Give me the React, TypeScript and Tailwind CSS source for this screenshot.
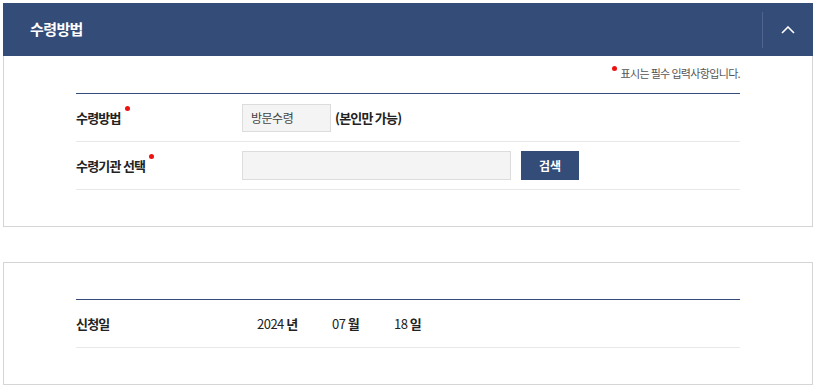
import React from 'react';

const NAVY = 'bg-[#344c78]';

const Dot = () => (
  <span className="relative -top-[12px] ml-[4px] inline-block h-[5px] w-[5px] rounded-full bg-[#ee1111]" />
);

export default function App() {
  return (
    <div
      className="h-[391px] w-[820px] bg-white pl-[3px] pt-[3px] text-[#222]"
      style={{ fontFamily: '"Noto Sans CJK KR", "Noto Sans", sans-serif' }}
    >
      {/* 수령방법 패널 */}
      <section className="w-[810px]">
        <div className={`flex h-[53px] items-center justify-between ${NAVY}`}>
          <h2 className="pl-[27px] text-[15px] font-bold tracking-[-0.04em] text-white">수령방법</h2>
          <div className="flex h-[36px] w-[51px] items-center justify-center border-l border-[#4f6590]">
            <svg width="14" height="8" viewBox="0 0 14 8" fill="none">
              <polyline points="1,7 7,1 13,7" stroke="white" strokeWidth="1.6" />
            </svg>
          </div>
        </div>
        <div className="border-x border-b border-[#d5d5d5] px-[72px] pb-[36px]">
          <div className="flex h-[37px] items-center justify-end pb-[3px] text-[11px] tracking-[-0.06em] text-[#555]">
            <span className="relative -top-[5px] mr-[3px] inline-block h-[5px] w-[5px] rounded-full bg-[#ee1111]" />
            표시는 필수 입력사항입니다.
          </div>
          <div className="border-t border-[#344c78]">
            <div className="flex h-[48px] items-center border-b border-[#e8e8e8]">
              <div className="w-[166px] text-[13px] font-bold tracking-[-0.06em]">
                수령방법
                <Dot />
              </div>
              <div className="flex h-[28px] w-[89px] items-center border border-[#dcdcdc] bg-[#f4f4f4] pl-[8px] text-[12px] tracking-[-0.04em] text-[#444]">
                방문수령
              </div>
              <span className="ml-[4px] text-[13px] font-bold tracking-[-0.06em]">(본인만 가능)</span>
            </div>
            <div className="flex h-[48px] items-center border-b border-[#e8e8e8]">
              <div className="w-[166px] text-[13px] font-bold tracking-[-0.06em]">
                수령기관 선택
                <Dot />
              </div>
              <div className="h-[29px] w-[269px] border border-[#dcdcdc] bg-[#f4f4f4]" />
              <button className={`ml-[10px] h-[29px] w-[58px] text-[12px] font-bold text-white ${NAVY}`}>검색</button>
            </div>
          </div>
        </div>
      </section>

      {/* 신청일 패널 */}
      <section className="mt-[35px] w-[810px] border border-[#d5d5d5] px-[72px] pb-[36px] pt-[36px]">
        <div className="border-t border-[#344c78]">
          <div className="flex h-[48px] items-center border-b border-[#e8e8e8] text-[13px]">
            <div className="w-[181px] font-bold tracking-[-0.06em]">신청일</div>
            <div className="flex items-center tracking-[-0.04em]">
              <span className="w-[75px]">2024 <b>년</b></span>
              <span className="w-[62px]">07 <b>월</b></span>
              <span>18 <b>일</b></span>
            </div>
          </div>
        </div>
      </section>
    </div>
  );
}
